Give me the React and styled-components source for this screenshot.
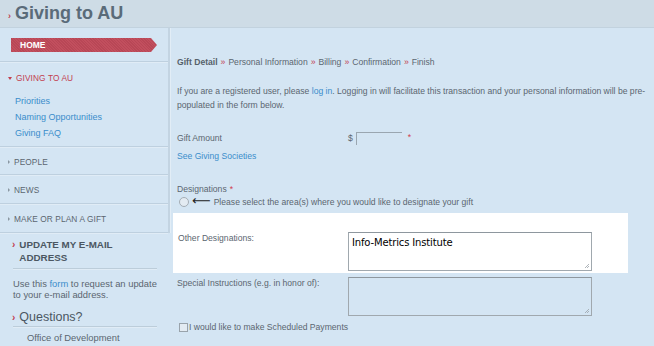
import React from "react";
import styled, { createGlobalStyle } from "styled-components";

const Global = createGlobalStyle`
  html, body { margin: 0; padding: 0; }
  body {
    background: #d4e5f3;
    font-family: "Liberation Sans", Arial, sans-serif;
    overflow: hidden;
    width: 654px;
    height: 346px;
  }
`;

const Page = styled.div`
  width: 654px;
  height: 346px;
  display: flex;
  flex-direction: column;
  overflow: hidden;
`;

const Header = styled.header`
  height: 27px;
  background: #cedce6;
  border-bottom: 1px solid #c2d2de;
  display: flex;
  align-items: center;
  gap: 4px;
  padding-left: 8px;
  flex-shrink: 0;
`;

const Chevron = styled.span`
  color: #c0404f;
  font-weight: bold;
  font-size: 9px;
  margin-top: 4px;
`;

const Title = styled.h1`
  margin: 0;
  font-family: "Liberation Sans", Arial, sans-serif;
  font-weight: bold;
  font-size: 18px;
  color: #5a6b79;
`;

const Body = styled.div`
  display: flex;
  flex: 1;
`;

const Sidebar = styled.aside`
  width: 170px;
  flex-shrink: 0;
  display: flex;
  flex-direction: column;
`;

const NavBox = styled.nav`
  border-right: 2px solid #c3d4e2;
  box-shadow: 1px 0 0 #e2edf6;
  display: flex;
  flex-direction: column;
`;

const NavRow = styled.div`
  height: ${(p) => p.$h}px;
  box-sizing: border-box;
  border-bottom: 1px solid #bed0df;
  box-shadow: 0 1px 0 #e0ecf6;
  display: flex;
  flex-direction: column;
  justify-content: ${(p) => (p.$top ? "flex-start" : "center")};
  padding-left: 8px;
  padding-top: ${(p) => p.$pt || 0}px;
`;

const HomeBar = styled.div`
  width: 146px;
  height: 14px;
  margin-left: 3px;
  box-sizing: border-box;
  background: repeating-linear-gradient(
    45deg,
    #c24f5e 0px,
    #c24f5e 1px,
    #b84756 1px,
    #b84756 2px
  );
  clip-path: polygon(0 0, 140px 0, 146px 7px, 140px 14px, 0 14px);
  color: #ffffff;
  font-weight: bold;
  font-size: 8.5px;
  line-height: 14px;
  padding-left: 9px;
`;

const NavLabel = styled.div`
  display: flex;
  align-items: center;
  gap: 4px;
  font-size: 8.3px;
  letter-spacing: 0.1px;
  color: ${(p) => (p.$active ? "#c2404f" : "#5b6670")};
`;

const Tri = styled.span`
  width: 0;
  height: 0;
  ${(p) =>
    p.$down
      ? `border-left: 2.5px solid transparent; border-right: 2.5px solid transparent; border-top: 3px solid #c2404f; margin-top: 1px;`
      : `border-top: 2px solid transparent; border-bottom: 2px solid transparent; border-left: 2.5px solid #8a97a2;`}
`;

const SubLinks = styled.div`
  display: flex;
  flex-direction: column;
  padding-left: 7px;
  margin-top: 12px;
  gap: 3px;
`;

const NavLink = styled.a`
  color: #3a8dcb;
  text-decoration: none;
  font-size: 9px;
  line-height: 13px;
  cursor: pointer;
`;

const InlineLink = styled.a`
  color: #3a8dcb;
  text-decoration: none;
  cursor: pointer;
`;

const Box = styled.div`
  padding: ${(p) => p.$pad};
`;

const BoxHead = styled.div`
  display: flex;
  gap: 4px;
  font-weight: ${(p) => p.$fw || "bold"};
  font-size: ${(p) => p.$fs}px;
  line-height: ${(p) => p.$lh}px;
  color: #4b5762;
  border-bottom: 1px solid #bccdda;
  box-shadow: 0 1px 0 #e0ecf6;
  margin-left: 13px;
  margin-right: 13px;
  margin-top: ${(p) => p.$mt || 0}px;
  padding-bottom: ${(p) => p.$pb}px;
`;

const RedArrow = styled.span`
  color: #c2404f;
  font-weight: bold;
  font-size: 10px;
  margin-left: -1px;
`;

const SmallText = styled.p`
  margin: ${(p) => p.$m};
  font-size: 9.4px;
  line-height: 11px;
  color: #5b6670;
`;

const Main = styled.main`
  flex: 1;
  padding-left: 7px;
  display: flex;
  flex-direction: column;
  color: #5b6670;
  font-size: 8.6px;
`;

const Crumbs = styled.div`
  margin-top: 28px;
  line-height: 12px;
  display: flex;
  gap: 3px;
  white-space: nowrap;
`;

const Strong = styled.span`
  font-weight: bold;
  color: #56616b;
`;

const Sep = styled.span`
  color: #c2404f;
`;

const Para = styled.p`
  margin: 16px 0 0 0;
  line-height: 14px;
  width: 480px;
`;

const FieldRow = styled.div`
  display: flex;
  align-items: flex-start;
  margin-top: ${(p) => p.$mt || 0}px;
`;

const Label = styled.div`
  width: ${(p) => p.$w || 171}px;
  flex-shrink: 0;
  line-height: 12px;
  display: flex;
  flex-direction: column;
  gap: ${(p) => p.$gap || 0}px;
`;

const Dollar = styled.span`
  margin-right: 3px;
  line-height: 12px;
`;

const AmountInput = styled.div`
  width: 46px;
  height: 13px;
  border-top: 1px solid #9aa6b0;
  border-left: 1px solid #9aa6b0;
  box-sizing: border-box;
`;

const Req = styled.span`
  color: #d0404f;
  margin-left: ${(p) => p.$ml || 6}px;
`;

const RadioLine = styled.div`
  display: flex;
  align-items: center;
  gap: 3px;
  margin-top: 2px;
  margin-left: 2px;
  white-space: nowrap;
`;

const Radio = styled.span`
  width: 8px;
  height: 8px;
  border-radius: 50%;
  border: 1px solid #a4adb5;
  background: #e3ebf2;
`;

const ArrowGlyph = styled.span`
  font-family: "DejaVu Sans", sans-serif;
  font-size: 13px;
  line-height: 10px;
  color: #222;
  margin-top: -3px;
`;

const WhiteBox = styled.div`
  background: #ffffff;
  width: 455px;
  height: 60px;
  margin-left: -4px;
  margin-top: 6px;
  box-sizing: border-box;
  padding: 19px 0 0 5px;
  display: flex;
`;

const TextArea = styled.div`
  width: 244px;
  height: 39px;
  box-sizing: border-box;
  border: 1px solid #a0a8ae;
  border-top-color: #8e979e;
  background: ${(p) => (p.$empty ? "#d4e5f3" : "#ffffff")};
  position: relative;
  padding: 3px 0 0 3px;
  color: #000;
  font-family: "DejaVu Sans", Verdana, sans-serif;
  font-size: 10px;
  line-height: 13px;
  letter-spacing: -0.15px;
`;

const Grip = styled.svg`
  position: absolute;
  right: 1px;
  bottom: 1px;
`;

const CheckRow = styled.div`
  display: flex;
  align-items: center;
  gap: 1px;
  margin-top: 6px;
  margin-left: 2px;
`;

const Check = styled.span`
  width: 7px;
  height: 7px;
  border: 1px solid #99a3ab;
  background: #e3ebf2;
`;

function Resize() {
  return (
    <Grip width="6" height="6" viewBox="0 0 6 6">
      <path d="M5 1 L1 5 M5 3 L3 5" stroke="#9aa2a8" strokeWidth="0.8" />
    </Grip>
  );
}

export default function App() {
  return (
    <Page>
      <Global />
      <Header>
        <Chevron>›</Chevron>
        <Title>Giving to AU</Title>
      </Header>
      <Body>
        <Sidebar>
          <NavBox>
            <NavRow $h={34} $top $pt={10}>
              <HomeBar>HOME</HomeBar>
            </NavRow>
            <NavRow $h={85} $top $pt={11}>
              <NavLabel $active>
                <Tri $down />
                GIVING TO AU
              </NavLabel>
              <SubLinks>
                <NavLink>Priorities</NavLink>
                <NavLink>Naming Opportunities</NavLink>
                <NavLink>Giving FAQ</NavLink>
              </SubLinks>
            </NavRow>
            <NavRow $h={28} $pt={2}>
              <NavLabel>
                <Tri />
                PEOPLE
              </NavLabel>
            </NavRow>
            <NavRow $h={29} $pt={2}>
              <NavLabel>
                <Tri />
                NEWS
              </NavLabel>
            </NavRow>
            <NavRow $h={29} $pt={2}>
              <NavLabel>
                <Tri />
                MAKE OR PLAN A GIFT
              </NavLabel>
            </NavRow>
          </NavBox>
          <Box $pad="5px 0 0 0">
            <BoxHead $fs={9.8} $lh={13} $pb={4}>
              <RedArrow>›</RedArrow>
              <span>
                UPDATE MY E-MAIL
                <br />
                ADDRESS
              </span>
            </BoxHead>
            <SmallText $m="9px 0 0 13px">
              Use this <InlineLink>form</InlineLink> to request an update
              <br />
              to your e-mail address.
            </SmallText>
            <BoxHead $fs={12.5} $lh={15} $pb={1} $mt={10} $fw={500}>
              <RedArrow>›</RedArrow>
              <span>Questions?</span>
            </BoxHead>
            <SmallText $m="5px 0 0 27px">Office of Development</SmallText>
          </Box>
        </Sidebar>
        <Main>
          <Crumbs>
            <Strong>Gift Detail</Strong>
            <Sep>»</Sep>
            <span>Personal Information</span>
            <Sep>»</Sep>
            <span>Billing</span>
            <Sep>»</Sep>
            <span>Confirmation</span>
            <Sep>»</Sep>
            <span>Finish</span>
          </Crumbs>
          <Para>
            If you are a registered user, please <InlineLink>log in</InlineLink>. Logging in will
            facilitate this transaction and your personal information will be pre-populated in the
            form below.
          </Para>
          <FieldRow $mt={20}>
            <Label $gap={6}>
              <span>Gift Amount</span>
              <InlineLink>See Giving Societies</InlineLink>
            </Label>
            <Dollar>$</Dollar>
            <AmountInput />
            <Req>*</Req>
          </FieldRow>
          <FieldRow $mt={21}>
            <Label>
              <span>
                Designations<Req $ml={3}>*</Req>
              </span>
            </Label>
          </FieldRow>
          <RadioLine>
            <Radio />
            <ArrowGlyph>⟵</ArrowGlyph>
            <span>Please select the area(s) where you would like to designate your gift</span>
          </RadioLine>
          <WhiteBox>
            <Label $w={170}>Other Designations:</Label>
            <TextArea>
              Info-Metrics Institute
              <Resize />
            </TextArea>
          </WhiteBox>
          <FieldRow $mt={4}>
            <Label>Special Instructions (e.g. in honor of):</Label>
            <TextArea $empty>
              <Resize />
            </TextArea>
          </FieldRow>
          <CheckRow>
            <Check />
            <span>I would like to make Scheduled Payments</span>
          </CheckRow>
        </Main>
      </Body>
    </Page>
  );
}
